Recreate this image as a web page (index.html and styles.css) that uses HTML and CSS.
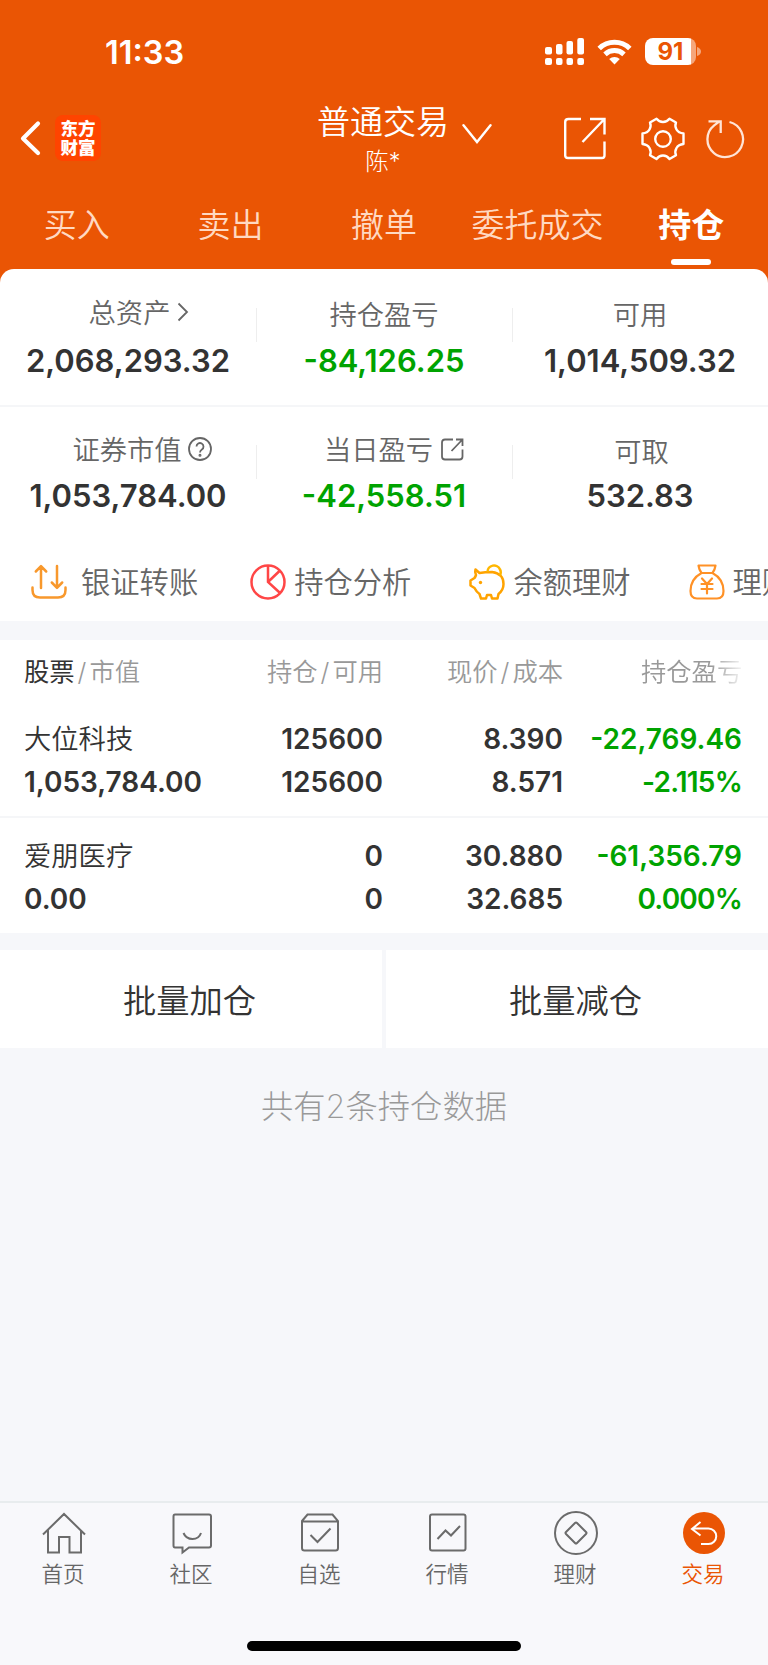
FILE: index.html
```html
<!DOCTYPE html>
<html lang="zh-CN">
  <head>
    <meta charset="UTF-8" />
    <meta name="viewport" content="width=device-width, initial-scale=1.0" />
    <title>普通交易 - 持仓</title>
    <link rel="stylesheet" href="styles.css">
  </head>
  <body>
    <header class="header">
      <div class="status-bar">
        <div class="time">11:33</div>
        <div class="status-icons">
          <svg class="signal" width="39" height="27" viewBox="0 0 39 27" fill="#fff">
            <rect x="0" y="9" width="7" height="7.5" rx="2" />
            <rect x="11" y="6" width="6.5" height="10.5" rx="2" />
            <rect x="21.5" y="3" width="6.5" height="13.5" rx="2" />
            <rect x="32.3" y="0" width="6.7" height="16.5" rx="2" />
            <rect x="0" y="20" width="7" height="7" rx="2" />
            <rect x="11" y="20" width="6.5" height="7" rx="2" />
            <rect x="21.5" y="20" width="6.5" height="7" rx="2" />
            <rect x="32.3" y="20" width="6.7" height="7" rx="2" />
          </svg>
          <svg class="wifi" width="35" height="26" viewBox="0 0 35 26">
            <path d="M2.2 9.5a22 22 0 0 1 30.6 0M8 15.3a14 14 0 0 1 19 0" fill="none" stroke="#fff" stroke-width="5" />
            <path d="M12.2 20a8 8 0 0 1 10.6 0L17.5 25.5z" fill="#fff" />
          </svg>
          <div class="battery"><span>91</span></div>
          <svg class="battery-tip" width="4" height="9" viewBox="0 0 4 9"><path d="M0 0q4 1.500 4 4.500T0 9z" fill="#f5a67c" /></svg>
        </div>
      </div>

      <div class="nav">
        <div class="nav-left">
          <svg width="22" height="36" viewBox="0 0 22 36" fill="none" stroke="#fff" stroke-width="4.200" stroke-linecap="round" stroke-linejoin="round"><path d="M18 3.500L3 18.500L18 33" /></svg>
          <div class="logo">东方<br>财富</div>
        </div>
        <div class="nav-title">
          <h1>普通交易</h1>
          <p>陈*</p>
        </div>
        <svg class="nav-arrow" width="30" height="22" viewBox="0 0 30 22" fill="none" stroke="#fff" stroke-width="2.400" stroke-linecap="round"><path d="M1.500 3.200L15 20L28.500 3.200" /></svg>
        <div class="nav-right">
          <svg width="42" height="43" viewBox="0 0 42 43" fill="none" stroke="#fff" stroke-width="2.400">
            <path d="M17 2H4.500Q1.200 2 1.200 5V38.500Q1.200 41 4 41H38Q40.500 41 40.500 38.500V24.500M26 2H40.500V17.500M40 2.500L18.500 25" />
          </svg>
          <svg class="gear" width="44" height="44" viewBox="0 0 44 44" fill="none" stroke="#fff" stroke-width="2.400" stroke-linejoin="round">
            <path d="M15.500 1.800Q18 5 22 5T28.500 1.800L35 5.500Q33.500 9 35.500 12.500T42.500 16.500V27Q37.500 27.500 35.500 31T35 38.300L28.500 42Q26 38.500 22 38.500T15.500 42L9 38.300Q10.500 34.500 8.500 31T1.500 27V16.500Q6.500 16 8.500 12.500T9 5.500Z" />
            <circle cx="22" cy="22" r="7.800" />
          </svg>
          <svg class="refresh" width="40" height="40" viewBox="0 0 40 40" fill="none" stroke="#ffe4d6" stroke-width="2.300">
            <path d="M24.500 3A17.800 17.800 0 1 1 9.200 6.300L14.500 2.400M3.500 2.400H15.700V14" />
          </svg>
        </div>
      </div>

      <div class="tabs">
        <div class="tab">买入</div>
        <div class="tab">卖出</div>
        <div class="tab">撤单</div>
        <div class="tab">委托成交</div>
        <div class="tab active">持仓</div>
      </div>
    </header>

    <!-- Account totals -->
    <section class="summary">
      <div class="summary-row">
        <div class="stat">
          <div class="label raised">总资产<svg class="more" width="12" height="20" viewBox="0 0 12 20" fill="none" stroke="#666" stroke-width="1.800"><path d="M1.500 1.500L10 10L1.500 18.500" /></svg></div>
          <div class="value">2,068,293.32</div>
        </div>
        <div class="stat">
          <div class="label">持仓盈亏</div>
          <div class="value green">-84,126.25</div>
        </div>
        <div class="stat">
          <div class="label">可用</div>
          <div class="value">1,014,509.32</div>
        </div>
      </div>
      <div class="summary-row second">
        <div class="stat">
          <div class="label raised">证券市值<svg class="help" width="24" height="24" viewBox="0 0 24 24" fill="none" stroke="#666" stroke-width="1.800"><circle cx="12" cy="12" r="11" /><path d="M8.500 9.500a3.500 3.500 0 1 1 5.400 3Q12 13.700 12 15.500" /><circle cx="12" cy="18.200" r="0.600" /></svg></div>
          <div class="value">1,053,784.00</div>
        </div>
        <div class="stat">
          <div class="label raised">当日盈亏<svg class="share" width="23" height="23" viewBox="0 0 23 23" fill="none" stroke="#666" stroke-width="1.800"><path d="M12 1.500H4Q1 1.500 1 4.500V18.500Q1 21.500 4 21.500H18.500Q21.500 21.500 21.500 18.500V11.500M15 1.500H21.500V8M21 2L10.500 13" /></svg></div>
          <div class="value green">-42,558.51</div>
        </div>
        <div class="stat">
          <div class="label">可取</div>
          <div class="value">532.83</div>
        </div>
      </div>

      <!-- Shortcuts, the last one runs off the screen -->
      <div class="shortcuts">
        <div class="shortcut transfer">
          <svg width="36" height="36" viewBox="0 0 36 36" fill="none" stroke="#f8982c" stroke-width="2.500" stroke-linecap="round" stroke-linejoin="round">
            <path d="M10 24V2.500M4.800 7.500L10 2.200L15.200 7.500M26 2V23.500M20.800 18.500L26 23.800L31.200 18.500M1.500 23.500V26Q1.500 33.500 9 33.500H27Q34.500 33.500 34.500 26V23.500" />
          </svg>
          <span>银证转账</span>
        </div>
        <div class="shortcut analysis">
          <svg width="36" height="36" viewBox="0 0 36 36" fill="none" stroke="#ff4646" stroke-width="2.500">
            <circle cx="18" cy="18" r="16.500" /><path d="M18 1.500V18L29.500 28.500M18 18L29.500 7" />
          </svg>
          <span>持仓分析</span>
        </div>
        <div class="shortcut piggy">
          <svg width="36" height="36" viewBox="0 0 36 36" fill="none" stroke="#ffa300" stroke-width="2.500" stroke-linejoin="round">
            <path d="M6.500 5.500L10.500 9Q16 8 23 8Q34.500 9.500 34.500 20Q34.500 26 29.500 30L28.500 34.500H23L22 31H18L17 34.500H12L10.500 30Q7.500 28 5.500 24L1.500 21.500V16.500L5.500 14Q6.500 12.500 7 11Q5.500 8.500 6.500 5.500Z" />
            <path d="M18.500 8A6.500 6.500 0 0 1 31 5.500Q32.500 8 31 11.500" stroke="#ffb700" />
            <circle cx="11.500" cy="18.500" r="1.700" fill="#ffa300" stroke="none" />
          </svg>
          <span>余额理财</span>
        </div>
        <div class="shortcut bag">
          <svg width="36" height="36" viewBox="0 0 36 36" fill="none" stroke="#ff9126" stroke-width="2.200" stroke-linecap="round" stroke-linejoin="round">
            <path d="M10.500 1.500H26.500Q26 5.500 23.500 9H12.500Q10 5.500 9.500 1.500ZM12.500 9Q1.500 15 1.500 27Q1.500 34.500 8 34.500H28Q34.500 34.500 34.500 27Q34.500 15 23.500 9M13 14.500L18 20L23 14.500M18 20V29.500M12.500 20H23.500M12.500 25H23.500" />
          </svg>
          <span>理财</span>
        </div>
      </div>
    </section>

    <section class="holdings">
      <div class="holding-row head">
        <div><b>股票</b><i>/</i>市值</div>
        <div>持仓<i>/</i>可用</div>
        <div>现价<i>/</i>成本</div>
        <div class="fade">持仓盈亏</div>
      </div>
      <div class="holding-row">
        <div class="name">大位科技</div>
        <div>125600</div>
        <div>8.390</div>
        <div class="green">-22,769.46</div>
        <div>1,053,784.00</div>
        <div>125600</div>
        <div>8.571</div>
        <div class="green percent">-2.115%</div>
      </div>
      <div class="holding-row last">
        <div class="name">爱朋医疗</div>
        <div>0</div>
        <div>30.880</div>
        <div class="green">-61,356.79</div>
        <div>0.00</div>
        <div>0</div>
        <div>32.685</div>
        <div class="green percent">0.000%</div>
      </div>
    </section>

    <div class="batch">
      <button>批量加仓</button>
      <button>批量减仓</button>
    </div>
    <p class="total">共有2条持仓数据</p>

    <footer class="bottom">
      <nav class="bottom-nav">
        <a class="item">
          <svg width="44" height="44" viewBox="0 0 44 44"><path d="M1 23.500L22 3L43 23.500M6 19V41.500H17V26H27.500V41.500H39V19" /></svg>
          <span>首页</span>
        </a>
        <a class="item">
          <svg width="44" height="44" viewBox="0 0 44 44"><path d="M5 3.500H39Q41 3.500 41 5.500V34.500Q41 36.500 39 36.500H19L12.500 41.500V36.500H5Q3.500 36.500 3.500 34.500V5.500Q3.500 3.500 5 3.500ZM13.500 22Q16 28 22.500 28T31 22" /></svg>
          <span>社区</span>
        </a>
        <a class="item">
          <svg width="44" height="44" viewBox="0 0 44 44"><path d="M4 10L9.500 3.500H34.500L40 10V37Q40 39.500 37.500 39.500H6.500Q4 39.500 4 37ZM4 10.500H40M12.500 24L19.500 31L32.500 17.500" /></svg>
          <span>自选</span>
        </a>
        <a class="item">
          <svg width="44" height="44" viewBox="0 0 44 44"><rect x="4" y="3.500" width="35.500" height="36" rx="2" /><path d="M11.500 28L19.500 19.500L25 24.500L34 15" /></svg>
          <span>行情</span>
        </a>
        <a class="item">
          <svg width="44" height="44" viewBox="0 0 44 44"><circle cx="22" cy="22" r="21" /><path d="M21 12Q22 11 23 12L32 21Q33 22 32 23L23 32Q22 33 21 32L12 23Q11 22 12 21Z" /></svg>
          <span>理财</span>
        </a>
        <a class="item current">
          <svg width="44" height="44" viewBox="0 0 44 44"><circle cx="22" cy="22" r="21" /><path d="M18.500 11L10 18L18.500 24.500M10.500 17.500H26.500A7.500 7.500 0 0 1 26.500 33H19" /></svg>
          <span>交易</span>
        </a>
      </nav>
      <div class="home-indicator"></div>
    </footer>
  </body>
</html>
```
FILE: styles.css
```css
* {
  box-sizing: border-box;
}

body {
  display: flex;
  flex-direction: column;
  height: 1665px;
  margin: 0;
  overflow: hidden;
  background-color: #f6f7fa;
  color: #333;
  font-family: Inter, "Noto Sans CJK SC", sans-serif;
  font-weight: 350;
}

svg {
  display: block;
  flex-shrink: 0;
}

h1,
p {
  margin: 0;
  font-weight: inherit;
}

/* Orange header */
.header {
  height: 283px;
  flex-shrink: 0;
  background-color: #ea5504;
  color: #fff;
}

.status-bar {
  display: flex;
  justify-content: space-between;
  height: 104px;
  padding: 0 67px 0 105px;
}

.time {
  padding-top: 33px;
  font-size: 32.5px;
  font-weight: 600;
  line-height: 40px;
}

.status-icons {
  display: flex;
  align-items: center;
  height: 27px;
  margin-top: 38px;
}

.wifi {
  margin: 0 13px;
}

.battery {
  width: 51px;
  height: 27px;
  border-radius: 8px;
  background: linear-gradient(to right, #fff 46px, #f5a67c 46px);
  color: #ea5504;
  font-size: 24px;
  font-weight: 700;
  line-height: 28px;
  text-align: center;
}

.battery-tip {
  margin-left: 1px;
}

.nav {
  display: grid;
  grid-template-columns: 318px 130px 30px 1fr;
  height: 88px;
}

.nav-left {
  display: flex;
  align-items: center;
  gap: 13px;
  height: 68px;
  padding-left: 20px;
}

.logo {
  width: 46px;
  height: 46px;
  padding-top: 4px;
  border-radius: 8px;
  background-color: #ff4400;
  font-size: 17.5px;
  font-weight: 800;
  line-height: 19px;
  text-align: center;
}

.nav-title {
  text-align: center;
  white-space: nowrap;
}

.nav-title h1 {
  margin: 0 -4px;
  font-size: 33px;
  line-height: 37px;
}

.nav-title p {
  font-size: 23.5px;
  font-weight: 300;
  line-height: 41px;
}

.nav-arrow {
  margin: 18px 0 0 14px;
}

.nav-right {
  display: flex;
  align-items: center;
  justify-content: flex-end;
  height: 69px;
  padding-right: 23px;
}

.gear {
  margin-left: 35px;
}

.refresh {
  margin-left: 20px;
}

.tabs {
  display: grid;
  grid-template-columns: repeat(5, 1fr);
  font-size: 33px;
  line-height: 67px;
  text-align: center;
}

.tab {
  color: #ffd9c2;
}

.tab.active {
  color: #fff;
  font-weight: 600;
}

.tab.active::after {
  content: "";
  display: block;
  width: 40px;
  height: 6px;
  margin: 0 auto;
  border-radius: 3px;
  background-color: #fff;
}

/* Account totals */
.summary {
  height: 352px;
  flex-shrink: 0;
  margin-top: -14px;
  overflow: hidden;
  border-radius: 14px 14px 0 0;
  background-color: #fff;
}

.summary-row {
  display: grid;
  grid-template-columns: repeat(3, 1fr);
  height: 138px;
  padding-top: 24px;
  border-bottom: 2px solid #f5f6f8;
}

.summary-row.second {
  height: 128px;
  padding-top: 23px;
  border-bottom: none;
}

.stat {
  text-align: center;
}

.stat + .stat {
  background: linear-gradient(#eee, #eee) 0 15px / 1px 34px no-repeat;
}

.label {
  display: flex;
  align-items: center;
  justify-content: center;
  height: 40px;
  color: #666;
  font-size: 27.3px;
}

.label.raised {
  padding-bottom: 4px;
}

.label svg {
  margin-top: 2px;
}

.more {
  margin-left: 7px;
}

.help {
  margin-left: 6px;
}

.share {
  margin-left: 8px;
}

.stat:first-child .label {
  padding-left: 22px;
}

.second .stat:first-child .label {
  padding-left: 28px;
}

.second .stat:nth-child(2) .label {
  padding-left: 20px;
}

.second .stat:last-child .label {
  padding-left: 3px;
}

.value {
  font-size: 31px;
  font-weight: 600;
  line-height: 56px;
}

.second .value {
  line-height: 52px;
}

.green {
  color: #00a300;
}

.shortcuts {
  display: flex;
  align-items: center;
  height: 94px;
  padding-left: 31px;
  color: #666;
  font-size: 29.3px;
  white-space: nowrap;
}

.shortcut {
  display: flex;
  flex-shrink: 0;
  align-items: center;
  gap: 8px;
  margin-right: 58px;
}

.shortcut.transfer {
  gap: 14px;
  margin-right: 52px;
}

.shortcut span {
  padding-bottom: 5px;
}

/* Holdings table */
.holdings {
  flex-shrink: 0;
  margin-top: 19px;
  background-color: #fff;
}

.holding-row {
  display: grid;
  grid-template-columns: 220px 139px 180px 179px;
  align-content: start;
  height: 117px;
  padding: 17px 0 0 24px;
  border-bottom: 2px solid #f5f6f8;
  font-size: 28px;
  font-weight: 600;
  line-height: 43px;
  text-align: right;
}

.holding-row > :nth-child(4n + 1) {
  text-align: left;
}

.holding-row.last {
  height: 115px;
  border-bottom: none;
}

.holding-row .name {
  font-size: 27.3px;
  font-weight: 350;
}

.holding-row .percent {
  letter-spacing: -0.8px;
}

.holding-row.head {
  height: 61px;
  padding-top: 10px;
  border-bottom: none;
  color: #999;
  font-size: 25.3px;
  font-weight: 350;
}

.head b {
  color: #333;
  font-weight: 400;
}

.head i {
  margin: 0 3px;
  font-style: normal;
}

.head .fade {
  margin-left: 78px;
  text-align: left;
  white-space: nowrap;
  -webkit-mask-image: linear-gradient(to right, #000 70px, transparent 105px);
  mask-image: linear-gradient(to right, #000 70px, transparent 105px);
}

/* Batch buttons */
.batch {
  display: grid;
  grid-template-columns: 382px 382px;
  gap: 4px;
  flex-shrink: 0;
  margin-top: 17px;
}

.batch button {
  height: 98px;
  padding: 0 3px 2px 0;
  border: none;
  background-color: #fff;
  color: #333;
  font-family: inherit;
  font-size: 33.3px;
  font-weight: 350;
}

.total {
  margin-top: 36px;
  color: #999;
  font-size: 32.3px;
  font-weight: 200;
  line-height: 46px;
  text-align: center;
}

/* Bottom navigation */
.bottom {
  height: 164px;
  margin-top: auto;
  border-top: 2px solid #e8ecee;
  background-color: #f8f8fb;
}

.bottom-nav {
  display: grid;
  grid-template-columns: repeat(6, 1fr);
  height: 138px;
  padding-top: 8px;
}

.item {
  display: flex;
  flex-direction: column;
  align-items: center;
  color: #666;
  font-size: 21.5px;
  line-height: 38px;
}

.item span {
  margin-left: -2px;
}

.item svg {
  fill: none;
  stroke: #6b6b6b;
  stroke-width: 2;
}

.item.current {
  color: #ea5504;
}

.current svg circle {
  fill: #ea5504;
  stroke: none;
}

.current svg path {
  stroke: #fff;
  stroke-width: 2;
}

.home-indicator {
  width: 274px;
  height: 10px;
  margin: 0 auto;
  border-radius: 5px;
  background-color: #000;
}
```
